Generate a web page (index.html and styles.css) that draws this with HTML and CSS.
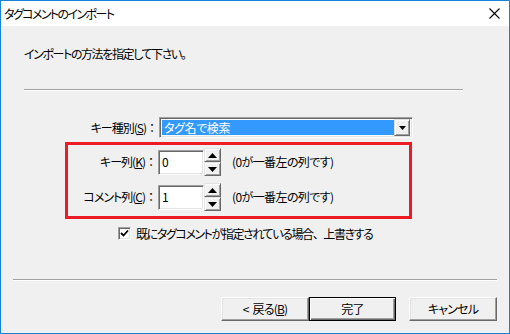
FILE: index.html
```html
<!DOCTYPE html>
<html lang="ja">
<head>
<meta charset="utf-8">
<link rel="stylesheet" href="styles.css">
</head>
<body>
<div class="window">
  <div class="titlebar">
    <span class="title">タグコメントのインポート</span>
    <svg class="close" width="11" height="11" viewBox="0 0 11 11"><path d="M0.5 0.5 L10.5 10.5 M10.5 0.5 L0.5 10.5" stroke="#000" stroke-width="1.1" fill="none"/></svg>
  </div>
  <div class="body">
    <p class="intro">インポートの方法を指定して下さい。</p>
    <div class="sep sep-top"></div>
    <div class="combo-row">
      <label class="lbl lbl-combo">キー種別(<u>S</u>)<span class="fw">：</span></label>
      <div class="combo">
        <div class="combo-value">タグ名で検索</div>
        <div class="combo-btn"><svg width="7" height="4" viewBox="0 0 7 4"><path d="M0 0 H7 L3.5 4 Z" fill="#000"/></svg></div>
      </div>
    </div>
    <div class="redbox">
      <div class="spin-row">
        <label class="lbl lbl-spin">キー列(<u>K</u>)<span class="fw">：</span></label>
        <div class="input">0</div>
        <div class="spinner">
          <div class="sbtn"><svg width="9" height="5" viewBox="0 0 9 5"><path d="M4.5 0 L9 5 H0 Z" fill="#000"/></svg></div>
          <div class="sbtn"><svg width="9" height="5" viewBox="0 0 9 5"><path d="M0 0 H9 L4.5 5 Z" fill="#000"/></svg></div>
        </div>
        <span class="hint">(0が一番左の列です)</span>
      </div>
      <div class="spin-row">
        <label class="lbl lbl-spin">コメント列(<u>C</u>)<span class="fw">：</span></label>
        <div class="input">1</div>
        <div class="spinner">
          <div class="sbtn"><svg width="9" height="5" viewBox="0 0 9 5"><path d="M4.5 0 L9 5 H0 Z" fill="#000"/></svg></div>
          <div class="sbtn"><svg width="9" height="5" viewBox="0 0 9 5"><path d="M0 0 H9 L4.5 5 Z" fill="#000"/></svg></div>
        </div>
        <span class="hint">(0が一番左の列です)</span>
      </div>
    </div>
    <div class="check-row">
      <span class="checkbox"><svg width="9" height="9" viewBox="0 0 9 9"><path d="M1 4 L3.5 6.5 L8 1.5" stroke="#000" stroke-width="1.8" fill="none"/></svg></span>
      <span class="check-label">既にタグコメントが指定されている場合<span class="fw">、</span>上書きする</span>
    </div>
    <div class="sep sep-bottom"></div>
    <div class="buttons">
      <div class="btn"><span class="lt">&lt;</span>戻る(<u>B</u>)</div>
      <div class="btn btn-default">完了</div>
      <div class="btn btn-cancel">キャンセル</div>
    </div>
  </div>
</div>
</body>
</html>
```

FILE: styles.css
```css
* { box-sizing: border-box; }
html, body { margin: 0; padding: 0; }
body {
  font-family: "Noto Sans CJK JP", "Noto Sans", sans-serif;
  font-size: 12px;
  font-feature-settings: "palt";
  letter-spacing: -1.4px;
  color: #000;
  background: #fff;
}
.fw { font-feature-settings: normal; }
.window {
  width: 510px;
  height: 334px;
  border: 1px solid #1883d7;
  display: flex;
  flex-direction: column;
}
.titlebar {
  height: 25px;
  background: #fff;
  display: flex;
  align-items: center;
  padding: 0 9px 0 3px;
  flex: none;
}
.title { font-size: 12px; line-height: 16px; letter-spacing: -1.6px; }
.close { margin-left: auto; }
.body {
  flex: 1;
  background: #f0f0f0;
  display: flex;
  flex-direction: column;
}
.intro {
  margin: 20px 0 0 23px;
  line-height: 16px;
}
.sep {
  height: 2px;
  border-top: 1px solid #a0a0a0;
  border-bottom: 1px solid #fff;
  flex: none;
}
.sep-top { margin: 27px 0 0 23px; width: 439px; }
.sep-bottom { margin: 39px 0 0 12px; width: 484px; }
.combo-row {
  display: flex;
  align-items: center;
  margin: 26px 0 0 64px;
  height: 21px;
}
.lbl { text-align: right; line-height: 16px; padding-right: 2px; letter-spacing: -1px; }
.lbl-combo { width: 94px; }
.lbl-spin { width: 90px; }
.combo {
  width: 254px;
  height: 21px;
  display: flex;
  border-style: solid;
  border-width: 1px;
  border-color: #a0a0a0 #fff #fff #a0a0a0;
  box-shadow: inset 1px 1px 0 #696969, inset -1px -1px 0 #e3e3e3;
  background: #fff;
  padding: 2px;
}
.combo-value {
  flex: 1;
  background: #3399ff;
  color: #fff;
  line-height: 15px;
  padding-left: 2px;
  letter-spacing: -0.4px;
}
.combo-btn {
  width: 16px;
  height: 17px;
  margin-top: -1px;
  background: #f0f0f0;
  border-style: solid;
  border-width: 1px;
  border-color: #e3e3e3 #696969 #696969 #e3e3e3;
  box-shadow: inset 1px 1px 0 #fff, inset -1px -1px 0 #a0a0a0;
  display: flex;
  align-items: center;
  justify-content: center;
}
.redbox {
  margin: 4px 0 0 64px;
  width: 347px;
  height: 77px;
  border: 3px solid #ed1c24;
  padding: 3px 0 5px 0;
  display: flex;
  flex-direction: column;
  gap: 7px;
}
.spin-row {
  display: flex;
  align-items: center;
  height: 28px;
}
.input {
  width: 46px;
  height: 25px;
  background: #fff;
  border-style: solid;
  border-width: 1px;
  border-color: #a0a0a0 #fff #fff #a0a0a0;
  box-shadow: inset 1px 1px 0 #696969, inset -1px -1px 0 #e3e3e3;
  padding-left: 3px;
  line-height: 22px;
}
.spinner {
  width: 17px;
  height: 28px;
  display: flex;
  flex-direction: column;
}
.sbtn {
  flex: 1;
  background: #f0f0f0;
  border-style: solid;
  border-width: 1px;
  border-color: #e3e3e3 #696969 #696969 #e3e3e3;
  box-shadow: inset 1px 1px 0 #fff, inset -1px -1px 0 #a0a0a0;
  display: flex;
  align-items: center;
  justify-content: center;
}
.hint { margin-left: 11px; line-height: 16px; letter-spacing: -0.6px; }
.check-row {
  display: flex;
  align-items: center;
  margin: 8px 0 0 117px;
  height: 13px;
}
.checkbox {
  width: 13px;
  height: 13px;
  background: #fff;
  border-style: solid;
  border-width: 1px;
  border-color: #a0a0a0 #fff #fff #a0a0a0;
  box-shadow: inset 1px 1px 0 #696969, inset -1px -1px 0 #e3e3e3;
  display: flex;
  align-items: center;
  justify-content: center;
}
.check-label { margin-left: 5px; line-height: 16px; }
.buttons {
  display: flex;
  justify-content: flex-end;
  margin-top: 16px;
  padding-right: 12px;
}
.btn {
  width: 88px;
  height: 24px;
  background: #f0f0f0;
  border-style: solid;
  border-width: 1px;
  border-color: #fff #696969 #696969 #fff;
  box-shadow: inset -1px -1px 0 #a0a0a0, inset 1px 1px 0 #e3e3e3;
  display: flex;
  align-items: center;
  justify-content: center;
  line-height: 16px;
  letter-spacing: -0.8px;
}
.lt { margin-right: 4px; }
.btn-default {
  width: 87px;
  border: 1px solid #000;
  box-shadow: inset 1px 1px 0 #fff, inset -1px -1px 0 #696969, inset -2px -2px 0 #a0a0a0;
}
.btn-cancel { margin-left: 13px; }
u { text-decoration: underline; text-underline-offset: 1px; }
```
